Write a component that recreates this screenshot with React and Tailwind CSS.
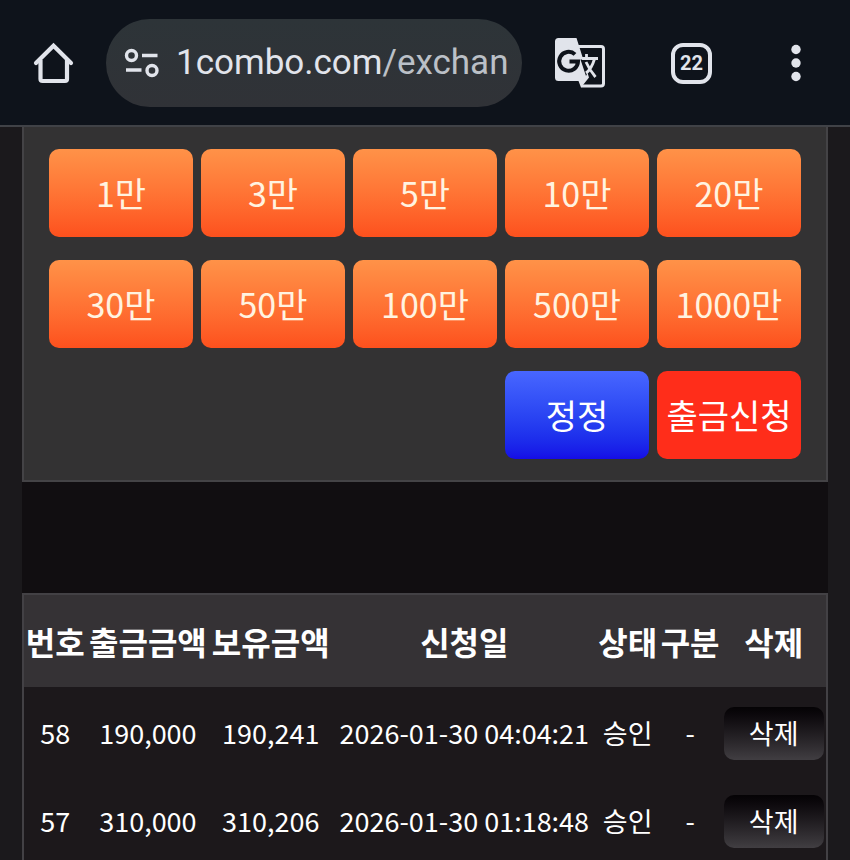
import React, { useState } from 'react';

const AMOUNTS = [1, 3, 5, 10, 20, 30, 50, 100, 500, 1000];

const COLUMNS = ['번호', '출금금액', '보유금액', '신청일', '상태', '구분', '삭제'];

const INITIAL_ROWS = [
    { id: 58, amount: '190,000', balance: '190,241', date: '2026-01-30 04:04:21', status: '승인', type: '-' },
    { id: 57, amount: '310,000', balance: '310,206', date: '2026-01-30 01:18:48', status: '승인', type: '-' },
];

const HomeIcon = () => (
    <svg viewBox="0 0 42 42" className="w-[42px] h-[42px]" fill="none" stroke="#e1e4eb" strokeWidth="4.2" aria-hidden="true">
        <path d="M3 21 L20.5 3.8 L38 21" strokeLinecap="round" />
        <path d="M7.5 18 V37 Q7.5 39 9.5 39 H32 Q34 39 34 37 V18" />
    </svg>
);

const SiteInfoIcon = () => (
    <svg viewBox="0 0 36 32" className="w-[36px] h-[32px] shrink-0" fill="none" stroke="#e1e4eb" strokeWidth="3.4" aria-hidden="true">
        <circle cx="7.5" cy="8.5" r="5" />
        <path d="M18 8.5 H33.5 M2 23 H17.5" />
        <circle cx="28" cy="23.5" r="5" />
    </svg>
);

const TranslateIcon = () => (
    <svg viewBox="0 0 50 50" className="w-[50px] h-[50px]" aria-hidden="true">
        <path d="M21 8.5 H46 Q48.5 8.5 48.5 11 V45.5 Q48.5 48 46 48 H26" fill="none" stroke="#e1e4eb" strokeWidth="3" />
        <path d="M3.5 0 H21.5 L34 39.5 L26 49.5 L23.5 43 H3.5 Q0 43 0 39.5 V3.5 Q0 0 3.5 0 Z" fill="#e1e4eb" />
        <path d="M20 16.4 A9.4 9.4 0 1 0 23 23.5 H14.5" fill="none" stroke="#0e131b" strokeWidth="4" />
        <path d="M25.5 21.5 L31 38 L34 32 L30.5 24 L29.8 21.8 Z" fill="#0e131b" />
        <path d="M27 20.5 H43 M31.5 16 V20.5 M31 24 Q34.5 32 40.5 39 M39.5 21 Q36.5 31 31 35" fill="none" stroke="#e1e4eb" strokeWidth="2.8" />
    </svg>
);

const MenuIcon = () => (
    <svg viewBox="0 0 12 38" className="w-[12px] h-[38px]" fill="#e1e4eb" aria-hidden="true">
        <circle cx="6" cy="5.5" r="4.7" />
        <circle cx="6" cy="19" r="4.7" />
        <circle cx="6" cy="32.5" r="4.7" />
    </svg>
);

const BrowserBar = () => (
    <header className="flex items-center shrink-0 pt-[19px] pb-[18px] pl-[33px] pr-12 bg-[#0e131b] border-b-2 border-[#404247]">
        <button type="button" aria-label="홈">
            <HomeIcon />
        </button>
        <div className="flex flex-1 items-center min-w-0 h-[88px] ml-[31px] mr-[33px] pl-[18px] pr-3 gap-4 rounded-full bg-linear-to-b from-[#2d3438] to-[#303237]">
            <SiteInfoIcon />
            <a href="#exchange" className="whitespace-nowrap text-[35px] leading-[48px] text-[#e1e4eb] font-[Roboto,sans-serif]">
                1combo.com<span className="text-[#bbc0c7]">/exchan</span>
            </a>
        </div>
        <button type="button" aria-label="번역">
            <TranslateIcon />
        </button>
        <button
            type="button"
            className="flex items-center justify-center w-[41px] h-[41px] ml-[66px] border-4 border-[#e1e4eb] rounded-xl text-[20px] leading-none font-bold text-[#e1e4eb] font-[Roboto,sans-serif]"
        >
            22
        </button>
        <button type="button" aria-label="메뉴" className="ml-[78px]">
            <MenuIcon />
        </button>
    </header>
);

const App = () => {
    const [rows, setRows] = useState(INITIAL_ROWS);
    const [total, setTotal] = useState(0);

    const handleDelete = (id) => {
        setRows(prev => prev.filter(row => row.id !== id));
    };

    return (
        <div className="flex flex-col h-screen overflow-hidden bg-[#1b191c] text-white font-['Noto_Sans_CJK_KR',sans-serif]">
            <BrowserBar />

            <main className="flex-1 min-h-0 overflow-hidden px-[22px]">
                <div className="min-h-full bg-[#110e11]">
                    <form
                        data-total={total}
                        onSubmit={(e) => e.preventDefault()}
                        className="grid grid-cols-5 gap-x-2 gap-y-[23px] px-[25px] pt-[22px] pb-[21px] bg-[#333233] border-x-2 border-b-2 border-[#444346] text-[34px] leading-[48px]"
                    >
                        {AMOUNTS.map(amount => (
                            <button
                                key={amount}
                                type="button"
                                onClick={() => setTotal(prev => prev + amount)}
                                className="h-[88px] rounded-[10px] whitespace-nowrap text-[#fff3e0] bg-linear-to-b from-[#ff9248] to-[#fd501d]"
                            >
                                {amount}만
                            </button>
                        ))}
                        <button
                            type="button"
                            onClick={() => setTotal(0)}
                            className="col-start-4 h-[88px] rounded-[10px] whitespace-nowrap bg-linear-to-b from-[#4866ff] to-[#160be6]"
                        >
                            정정
                        </button>
                        <button type="submit" className="h-[88px] rounded-[10px] whitespace-nowrap bg-[#ff2d1a]">
                            출금신청
                        </button>
                    </form>

                    <section className="mt-[111px] border-2 border-[#434145] bg-[#1c181b]">
                        <table className="w-full text-center whitespace-nowrap">
                            <thead className="bg-[#353235] text-[32px] leading-[48px]">
                                <tr className="h-[92px]">
                                    {COLUMNS.map(column => (
                                        <th key={column} className="px-px font-bold">{column}</th>
                                    ))}
                                </tr>
                            </thead>
                            <tbody className="text-[27px] leading-10">
                                {rows.map(row => (
                                    <tr key={row.id} className="h-[88px]">
                                        <td className="px-px pt-1">{row.id}</td>
                                        <td className="px-px pt-1">{row.amount}</td>
                                        <td className="px-px pt-1">{row.balance}</td>
                                        <td className="px-1 pt-1">{row.date}</td>
                                        <td className="px-px pt-1">{row.status}</td>
                                        <td className="px-px pt-1">{row.type}</td>
                                        <td className="px-px pt-1">
                                            <button
                                                type="button"
                                                onClick={() => handleDelete(row.id)}
                                                className="w-[100px] h-[53px] rounded-[10px] align-middle bg-linear-to-b from-[#050305] to-[#413e42]"
                                            >
                                                삭제
                                            </button>
                                        </td>
                                    </tr>
                                ))}
                            </tbody>
                        </table>
                    </section>
                </div>
            </main>
        </div>
    );
};

export default App;
